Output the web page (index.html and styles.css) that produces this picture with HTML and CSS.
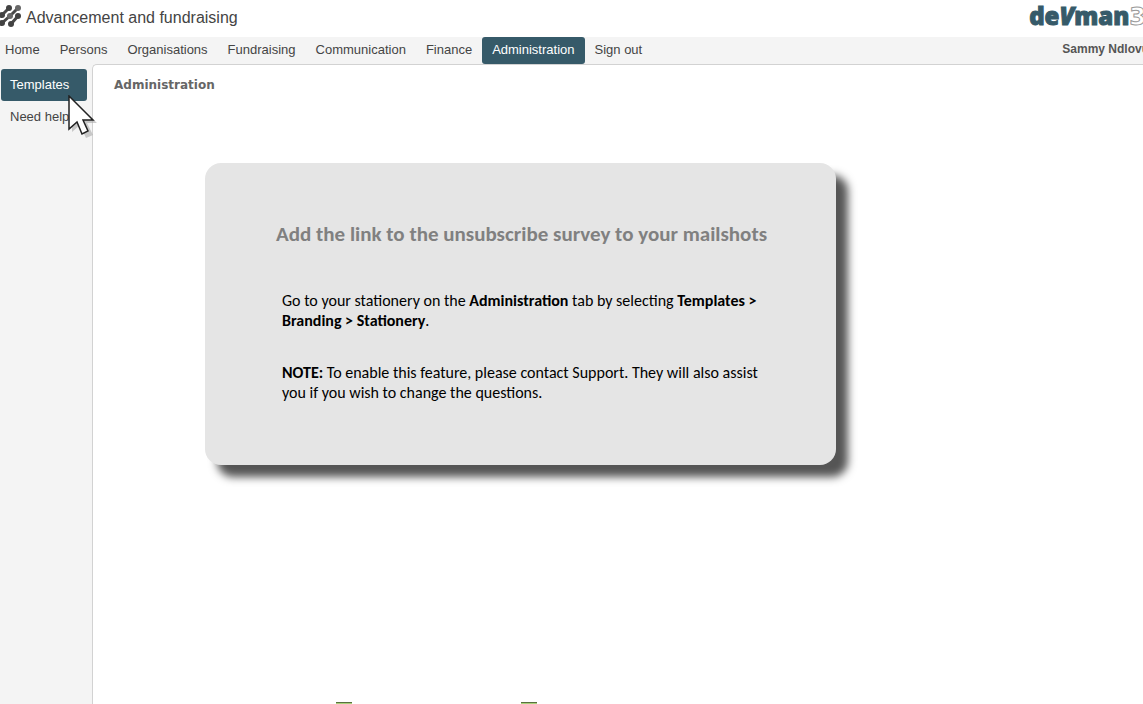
FILE: index.html
```html
<!DOCTYPE html>
<html lang="en">
<head>
<meta charset="utf-8">
<title>Advancement and fundraising</title>
<link rel="stylesheet" href="styles.css">
</head>
<body>
<header class="banner">
  <svg class="mark" viewBox="0 0 22 24" aria-hidden="true">
    <g stroke="#484848" stroke-width="3" fill="none">
      <path d="M2 11 9 4M2 19 11 11 18 4M11 20 18 12"/>
    </g>
    <g fill="#424242"><circle cx="9" cy="4" r="3"/><circle cx="2" cy="11" r="3"/><circle cx="2" cy="19" r="3"/><circle cx="18" cy="12" r="3"/><circle cx="11" cy="20" r="3"/></g>
    <g fill="#686868"><circle cx="18" cy="4" r="3"/><circle cx="10" cy="12" r="3"/></g>
  </svg>
  <h1 class="product">Advancement and fundraising</h1>
  <div class="logo">de<i>V</i>man<span class="logo-three">3</span></div>
</header>
<div class="bar">
  <nav class="tabs" aria-label="Main">
    <a class="tab" href="#">Home</a>
    <a class="tab" href="#">Persons</a>
    <a class="tab" href="#">Organisations</a>
    <a class="tab" href="#">Fundraising</a>
    <a class="tab" href="#">Communication</a>
    <a class="tab" href="#">Finance</a>
    <a class="tab active" href="#" aria-current="page">Administration</a>
    <a class="tab" href="#">Sign out</a>
  </nav>
  <span class="user">Sammy Ndlovu</span>
</div>
<div class="body">
  <nav class="side" aria-label="Administration">
    <a class="side-link active" href="#">Templates</a>
    <a class="side-link" href="#">Need help</a>
  </nav>
  <main class="content">
    <h2 class="page-title">Administration</h2>
    <section class="callout">
      <h3 class="callout-title">Add the link to the unsubscribe survey to your mailshots</h3>
      <div class="callout-text">
        <p>Go to your stationery on the <b>Administration</b> tab by selecting <b>Templates &gt;<br>Branding &gt; Stationery</b>.</p>
        <p><b>NOTE:</b> To enable this feature, please contact Support. They will also assist<br>you if you wish to change the questions.</p>
      </div>
    </section>
    <div class="bottom-icons"><i class="sheet"></i><i class="sheet"></i></div>
  </main>
</div>
<svg class="cursor" viewBox="0 0 32 46" aria-hidden="true">
  <path d="M4 4V37L12 30 18 43 25 40 19 28H29Z" fill="#aaa" opacity=".6"/>
  <path d="M1 1V34L9 27 14 39 20 36 15 25H25Z" fill="#fff" stroke="#222" stroke-width="1.5"/>
</svg>
</body>
</html>
```
FILE: styles.css
```css
* { box-sizing: border-box; }
body {
  margin: 0;
  min-height: 100vh;
  display: flex;
  flex-direction: column;
  overflow: hidden;
  background: #fff;
  color: #444;
  font: 13px/16px "Liberation Sans", Arial, sans-serif;
}
a { color: inherit; text-decoration: none; }
h1, h2, h3, p { margin: 0; }
.banner { display: flex; height: 37px; align-items: flex-start; padding-top: 4px; }
.mark { width: 22px; height: 24px; flex: none; }
.product { flex: 1; padding: 4px 0 0 4px; font-size: 16px; line-height: 20px; font-weight: 400; white-space: nowrap; }
.logo {
  margin-right: -3px;
  color: #365a69;
  font: 800 24px/24px "Open Sans", sans-serif;
  -webkit-text-stroke: 1px #365a69;
  white-space: nowrap;
}
.logo-three { color: #fff; font-family: "DejaVu Sans", sans-serif; font-weight: 700; -webkit-text-stroke: 1px #999; }
.bar { display: flex; justify-content: space-between; height: 28px; background: #f4f4f4; white-space: nowrap; }
.tabs { display: flex; margin-left: -5px; }
.tab { height: 27px; padding: 5px 10px; border-radius: 3px; }
.active { background: #365a69; color: #fff; }
.user { margin-right: -6px; padding-top: 4px; font-size: 12px; font-weight: 700; color: #555; }
.body { display: flex; flex: 1; background: #f4f4f4; }
.side { width: 92px; padding: 4px 5px 0 1px; flex: none; }
.side-link { display: block; padding: 8px 9px; border-radius: 3px; white-space: nowrap; }
.content {
  flex: 1;
  display: flex;
  flex-direction: column;
  margin-top: -1px;
  border: solid #d2d2d2;
  border-width: 1px 0 0 1px;
  border-radius: 5px 0 0 0;
  background: #fff;
  padding: 12px 21px 0;
}
.page-title { font: 700 12px/16px "DejaVu Sans", Verdana, sans-serif; color: #666; }
.callout {
  width: 631px;
  max-width: 100%;
  margin: 70px 0 0 91px;
  padding: 59px 60px 62px 71px;
  border-radius: 16px;
  background: #e5e5e5;
  box-shadow: 12px 12px 8px #555;
  color: #000;
  font: 16px/20px Carlito, Lato, sans-serif;
}
.callout-title { font-size: 21px; line-height: 24px; color: #808080; white-space: nowrap; }
.callout-text { display: grid; gap: 32px; padding: 45px 0 0 6px; white-space: nowrap; }
.bottom-icons { display: flex; gap: 169px; margin: auto 0 0 222px; }
.sheet { width: 16px; height: 2px; border-top: 1px solid #59703f; background: #a8d07a; }
.cursor { position: absolute; left: 68px; top: 95px; width: 32px; height: 46px; }
```
